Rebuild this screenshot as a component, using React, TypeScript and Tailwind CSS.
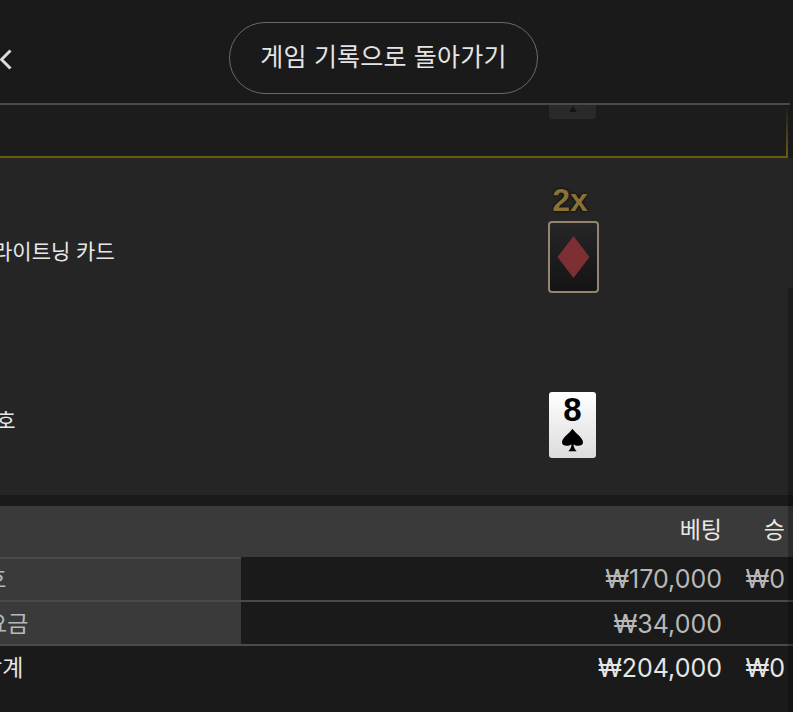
const font = { fontFamily: '"Liberation Sans", "Noto Sans CJK KR", sans-serif' };
const money = { fontFamily: 'Inter, "Liberation Sans", sans-serif' };

function Row({ label, offset, bet, win, labelBg, text, border, topLine }: { label: string; offset: string; bet: string; win: string; labelBg: boolean; text: string; border: boolean; topLine?: boolean }) {
  return (
    <div className={`flex ${topLine ? 'h-[45px]' : 'h-[44px]'} ${border ? 'border-b-2 border-[#4a4a4a]' : ''}`}>
      <div className={`w-[241px] shrink-0 overflow-hidden ${labelBg ? 'bg-[#3a3a3a]' : ''} ${topLine ? 'shadow-[inset_0_2px_0_#4a4a4a]' : ''}`}>
        <div className={`${offset} whitespace-nowrap text-[23px] leading-[45px] ${text}`}>{label}</div>
      </div>
      <div className={`flex-1 text-right text-[25px] leading-[44px] ${text}`} style={money}>{bet}</div>
      <div className={`w-[71px] shrink-0 text-right text-[25px] leading-[44px] pr-[8px] ${text}`} style={money}>{win}</div>
    </div>
  );
}

export default function App() {
  return (
    <div className="relative w-[793px] h-[712px] overflow-hidden bg-[#1a1a1a] text-white" style={font}>
      <div className="h-[105px] border-b-2 border-[#4a4a4a] mr-[3px] flex items-start">
        <svg className="mt-[49px] shrink-0" width="14" height="22" viewBox="0 0 14 22" fill="none">
          <path d="M10.5 1.5 L1.5 10.5 L10.5 19.5" stroke="#dcdcdc" strokeWidth="3" />
        </svg>
        <div className="ml-[215px] mt-[22px] w-[309px] h-[72px] rounded-[36px] border-[1.5px] border-[#6a6a6a] flex items-center justify-center text-[25px] tracking-[0.2px] text-[#e4e4e4]">
          게임 기록으로 돌아가기
        </div>
      </div>
      <div className="h-[53px] bg-[#1c1c1c] border-b-2 border-[#6b5c08] mr-[5px] relative">
        <div className="absolute right-0 top-0 bottom-0 w-[2px] bg-gradient-to-b from-[#1c1c1c] to-[#6b5c08]" />
        <div className="absolute left-[549px] top-0 w-[47px] h-[14px] bg-[#2a2a2a] rounded-b-[3px] flex justify-center">
          <div className="w-0 h-0 mt-[1px] border-x-[4px] border-x-transparent border-b-[6px] border-b-[#141414]" />
        </div>
      </div>
      <div className="h-[337px] bg-[#252525]">
        <div className="h-[180px] flex">
          <div className="w-[548px] shrink-0 pt-[79px] whitespace-nowrap text-[21px] leading-[30px] text-[#e8e8e8] -ml-[7px] mr-[7px]">라이트닝 카드</div>
          <div className="flex flex-col items-center w-[51px] pt-[24px]">
            <div className="text-[32px] leading-[36px] font-bold text-[#8a7136] mr-[7px]" style={{ textShadow: '0 0 3px #000' }}>2x</div>
            <div className="w-[51px] h-[72px] mt-[3px] rounded-[4px] border-2 border-[#94866e] bg-gradient-to-b from-[#262626] to-[#141414] flex items-center justify-center">
              <svg width="33" height="42" viewBox="0 0 33 42"><path d="M16.5 0 L32.5 21 L16.5 42 L0.5 21 Z" fill="#7d3034" /></svg>
            </div>
          </div>
        </div>
        <div className="flex">
          <div className="w-[549px] shrink-0 pt-[68px] whitespace-nowrap text-[21px] leading-[30px] text-[#e8e8e8] -ml-[23px] mr-[23px]">번호</div>
          <div className="w-[47px] h-[66px] mt-[54px] rounded-[3px] bg-gradient-to-b from-white to-[#dcdcdc] flex flex-col items-center">
            <span className="text-[33px] leading-[36px] font-bold text-black">8</span>
            <svg width="21" height="24" viewBox="0 0 20 28" preserveAspectRatio="none"><path d="M10 1 C13 7 20 11 20 17 C20 21 14 22 11 19 C11 22 12 25 14 27 L6 27 C8 25 9 22 9 19 C6 22 0 21 0 17 C0 11 7 7 10 1 Z" fill="#000" /></svg>
          </div>
        </div>
      </div>
      <div className="h-[11px] bg-[#1a1a1a]" />
      <div className="h-[51px] bg-[#3a3a3a] flex items-center text-[23px] text-[#e8e8e8]">
        <span className="flex-1 text-right pb-[2px]">베팅</span>
        <span className="w-[71px] shrink-0 pr-[8px] pb-[2px] text-right">승</span>
      </div>
      <Row label="번호" offset="-ml-[36px]" bet="₩170,000" win="₩0" labelBg topLine text="text-[#b8b8b8]" border />
      <Row label="요금" offset="-ml-[14px]" bet="₩34,000" win="" labelBg text="text-[#b8b8b8]" border />
      <Row label="합계" offset="-ml-[19px]" bet="₩204,000" win="₩0" labelBg={false} text="text-[#e6e6e6]" border={false} />
      <div className="absolute right-0 top-[288px] bottom-0 w-[5px] bg-black/25" />
    </div>
  );
}
